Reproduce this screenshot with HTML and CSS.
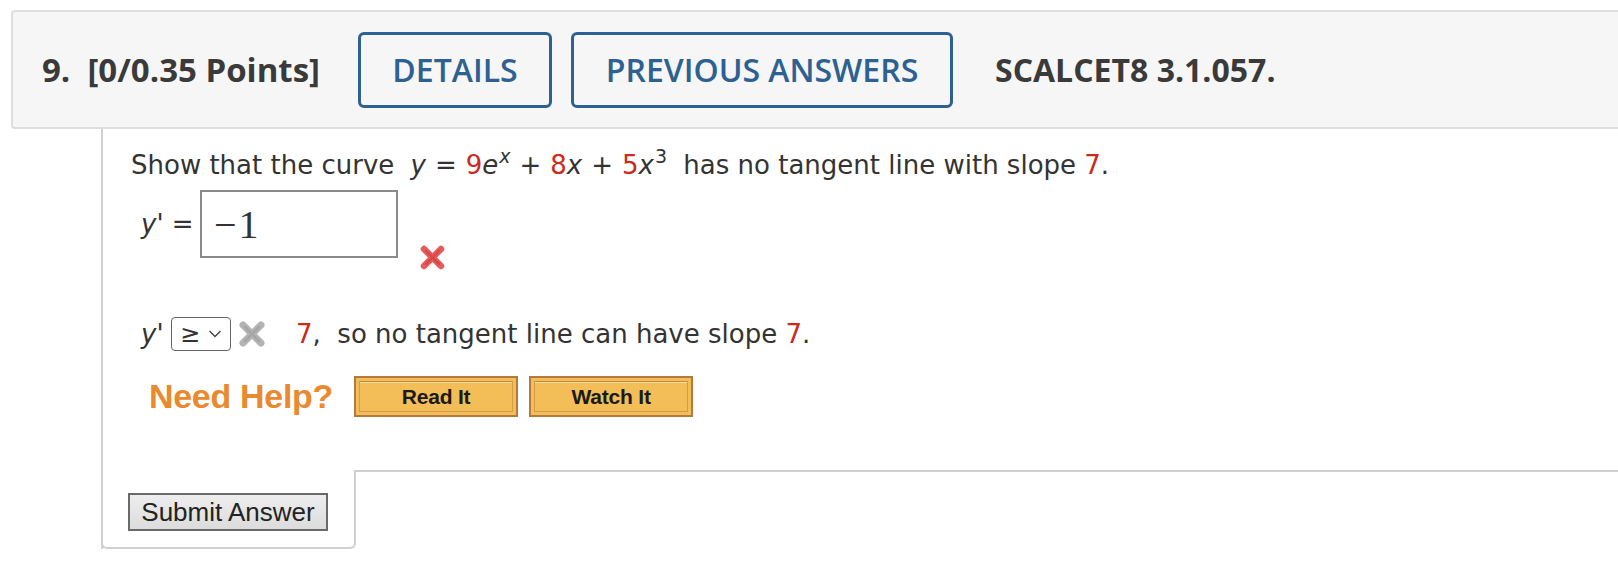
FILE: index.html
```html
<!DOCTYPE html>
<html>
<head>
<meta charset="utf-8">
<link rel="stylesheet" href="styles.css">
</head>
<body>
<div class="header">
  <div class="title">9.&nbsp; [0/0.35 Points]</div>
  <div class="tab tab-details">DETAILS</div>
  <div class="tab tab-prev">PREVIOUS ANSWERS</div>
  <div class="code">SCALCET8 3.1.057.</div>
</div>
<div class="panel">
  <div class="body">
    <p class="line1">Show that the curve <span class="math"><i>y</i><span class="op">=</span><span class="red">9</span><i>e</i><sup><i>x</i></sup><span class="op">+</span><span class="red">8</span><i>x</i><span class="op">+</span><span class="red">5</span><i>x</i><sup>3</sup></span> has no tangent line with slope <span class="red">7</span>.</p>
    <div class="row2">
      <span class="lbl"><i>y'</i> =</span>
      <div class="answer"><span class="val">−1</span></div>
      <svg class="xmark" width="27" height="27" viewBox="0 0 27 27"><g stroke="#e55c5c" stroke-width="6.5" stroke-linecap="round"><line x1="5" y1="5" x2="22" y2="22"/><line x1="22" y1="5" x2="5" y2="22"/></g><g stroke="#d94848" stroke-width="2.5" stroke-linecap="round"><line x1="7" y1="7" x2="20" y2="20"/><line x1="20" y1="7" x2="7" y2="20"/></g></svg>
    </div>
    <div class="row3">
      <span class="lbl2"><i>y'</i></span>
      <div class="select"><span class="ge">≥</span><svg width="14" height="10" viewBox="0 0 14 10"><polyline points="1.5,2 7,7.5 12.5,2" fill="none" stroke="#444" stroke-width="1.4"/></svg></div>
      <svg class="xgray" width="28" height="28" viewBox="0 0 28 28"><g stroke="#b4b4b4" stroke-width="7" stroke-linecap="round"><line x1="5" y1="5" x2="23" y2="23"/><line x1="23" y1="5" x2="5" y2="23"/></g><g stroke="#a6a6a6" stroke-width="2.5" stroke-linecap="round"><line x1="7" y1="7" x2="21" y2="21"/><line x1="21" y1="7" x2="7" y2="21"/></g></svg>
      <span class="rest"><span class="red">7</span>,&nbsp; so no tangent line can have slope <span class="red">7</span>.</span>
    </div>
    <div class="help">
      <span class="need">Need Help?</span>
      <div class="hbtn"><span>Read It</span></div>
      <div class="hbtn"><span>Watch It</span></div>
    </div>
  </div>
  <div class="footer">
    <div class="submit-box"><button class="submit">Submit Answer</button></div>
    <div class="footer-rest"></div>
  </div>
</div>
</body>
</html>
```
FILE: styles.css
```css
html, body {
  margin: 0;
  padding: 0;
  background: #ffffff;
}
body {
  width: 1618px;
  height: 566px;
  overflow: hidden;
  font-family: "DejaVu Sans", Verdana, sans-serif;
  color: #333;
}
.header {
  margin: 10px 0 0 11px;
  height: 115px;
  box-sizing: content-box;
  border: 2px solid #dedede;
  border-right: none;
  border-radius: 4px 0 0 4px;
  background: #f6f6f6;
  display: flex;
  align-items: center;
  padding-left: 29px;
  font-family: "Open Sans", sans-serif;
}
.title {
  font-weight: 700;
  font-size: 33px;
  color: #3a3a3a;
  margin-right: 38px;
  white-space: nowrap;
}
.tab {
  height: 76px;
  box-sizing: border-box;
  border: 3px solid #2d6191;
  border-radius: 6px;
  color: #2d6191;
  font-weight: 600;
  font-size: 32px;
  display: flex;
  align-items: center;
  justify-content: center;
  white-space: nowrap;
}
.tab-details {
  width: 194px;
  margin-right: 19px;
}
.tab-prev {
  width: 382px;
  margin-right: 42px;
}
.code {
  font-weight: 700;
  font-size: 32px;
  color: #3a3a3a;
  white-space: nowrap;
}
.panel {
  margin-left: 101px;
  border-left: 2px solid #d0d0d0;
  height: 420px;
  display: flex;
  flex-direction: column;
}
.body {
  padding-left: 28px;
  height: 341px;
  box-sizing: border-box;
  padding-top: 18px;
  font-size: 26px;
}
.line1 {
  margin: 0;
  line-height: 36px;
  white-space: nowrap;
}
.math {
  margin-left: 8px;
  margin-right: 8px;
}
.math .op {
  margin: 0 9px;
}
sup {
  font-size: 19px;
  line-height: 0;
  vertical-align: 11px;
  margin-left: 1px;
}
.red {
  color: #cc2a1f;
}
.row2 {
  margin-top: 7px;
  display: flex;
  align-items: flex-start;
  height: 82px;
}
.lbl {
  margin-left: 10px;
  width: 59px;
  line-height: 68px;
  white-space: nowrap;
}
.answer {
  width: 198px;
  height: 68px;
  box-sizing: border-box;
  border: 2px solid #8a8a8a;
  background: #fff;
  padding-left: 12px;
  display: flex;
  align-items: center;
}
.val {
  font-family: "Liberation Serif", "Times New Roman", serif;
  font-size: 40px;
  color: #333;
  letter-spacing: 2px;
}
.xmark {
  margin-left: 21px;
  margin-top: 54px;
}
.row3 {
  margin-top: 45px;
  display: flex;
  align-items: center;
  height: 34px;
}
.lbl2 {
  margin-left: 10px;
  width: 30px;
}
.select {
  width: 60px;
  height: 34px;
  box-sizing: border-box;
  border: 1.5px solid #666;
  border-radius: 4px;
  display: flex;
  align-items: center;
  padding-left: 8px;
  gap: 8px;
  background: #fff;
}
.ge {
  font-size: 24px;
  line-height: 1;
}
.xgray {
  margin-left: 7px;
}
.rest {
  margin-left: 30px;
  white-space: nowrap;
}
.help {
  margin-top: 25px;
  display: flex;
  align-items: center;
  height: 41px;
}
.need {
  margin-left: 18px;
  font-family: "Liberation Sans", Arial, sans-serif;
  font-size: 34px;
  font-weight: 700;
  color: #e98a30;
  margin-right: 21px;
  letter-spacing: -0.3px;
  white-space: nowrap;
}
.hbtn {
  width: 164px;
  height: 41px;
  box-sizing: border-box;
  border: 2px solid #b27a3c;
  background: #f3bd58;
  padding: 3px;
  margin-right: 11px;
}
.hbtn span {
  display: flex;
  align-items: center;
  justify-content: center;
  height: 100%;
  box-sizing: border-box;
  border: 1.5px solid #d49a48;
  border-top-color: #c8873a;
  box-shadow: inset 0 1px 0 #fbe0a8;
  font-family: "Liberation Sans", Arial, sans-serif;
  font-weight: 700;
  font-size: 21px;
  color: #1a1a1a;
  letter-spacing: -0.2px;
  white-space: nowrap;
}
.footer {
  display: flex;
  height: 79px;
  margin-left: -2px;
}
.submit-box {
  width: 255px;
  box-sizing: border-box;
  border: 2px solid #d0d0d0;
  border-top: none;
  border-radius: 0 0 6px 6px;
  padding: 23px 0 0 25px;
}
.submit {
  width: 200px;
  height: 38px;
  box-sizing: border-box;
  border: 2px solid #6a6a6a;
  background: linear-gradient(#ededed, #dcdcdc);
  font-family: "Liberation Sans", Arial, sans-serif;
  font-size: 26px;
  color: #222;
  padding: 0;
  border-radius: 0;
  white-space: nowrap;
}
.footer-rest {
  flex: 1;
  border-top: 2px solid #d0d0d0;
  margin-left: -2px;
}
```
